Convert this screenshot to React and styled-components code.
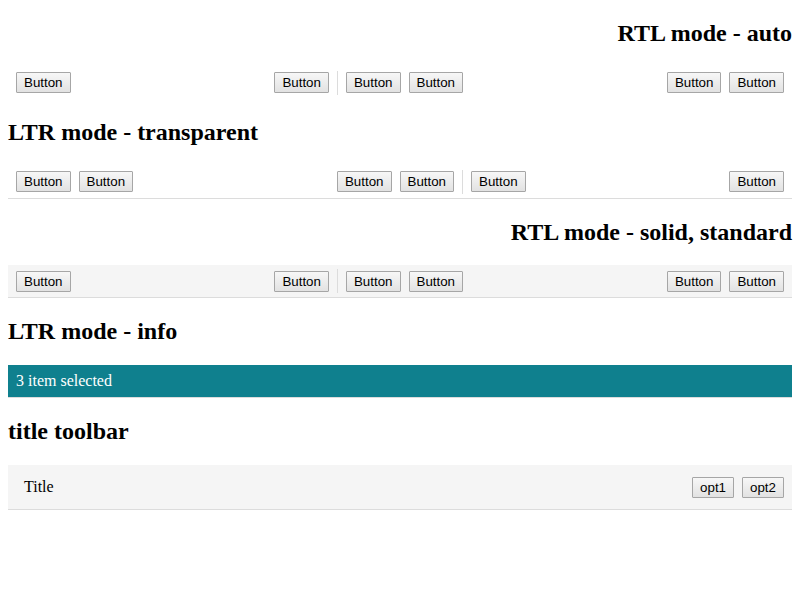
import React from 'react'
import styled, { createGlobalStyle } from 'styled-components'

const GlobalStyle = createGlobalStyle`
  body {
    margin: 0;
    font-family: "Liberation Serif", "Times New Roman", serif;
    background: #fff;
    color: #000;
  }
`

const Page = styled.div`
  padding: 0 8px;
`

const Heading = styled.h2`
  font-family: "Liberation Serif", serif;
  font-size: 24px;
  font-weight: bold;
  margin: 19.92px 0;
  direction: ${(p) => (p.$rtl ? 'rtl' : 'ltr')};
`

const Bar = styled.div`
  display: flex;
  align-items: center;
  box-sizing: border-box;
  height: ${(p) => (p.$border ? '33px' : '32px')};
  padding: 0 8px;
  direction: ${(p) => (p.$rtl ? 'rtl' : 'ltr')};
  background: ${(p) => (p.$solid ? '#f5f5f5' : 'transparent')};
  border-bottom: ${(p) => (p.$border ? '1px solid #dcdcdc' : 'none')};
`

const Side = styled.div`
  flex: 1 1 auto;
  display: flex;
  align-items: center;
  gap: 8px;
  justify-content: ${(p) => (p.$end ? 'flex-end' : 'flex-start')};
`

const Middle = styled.div`
  flex: 0 0 auto;
  display: flex;
  align-items: center;
  gap: 8px;
`

const Separator = styled.span`
  width: 1px;
  height: 24px;
  background: #dcdcdc;
`

const Btn = styled.button`
  font-family: "Liberation Sans", Arial, sans-serif;
  font-size: 13.33px;
  line-height: 15px;
  padding: 2px 7px;
  margin: 0;
  border: 1px solid #a6a6a6;
  border-radius: 1px;
  color: #000;
  background: linear-gradient(#f7f7f7, #e2e2e2);
`

const InfoBar = styled.div`
  display: flex;
  align-items: center;
  box-sizing: border-box;
  height: 33px;
  padding: 0 8px;
  background: #0f808e;
  color: #fff;
  font-size: 16px;
  border-bottom: 1px solid #dcdcdc;
`

const TitleBar = styled.div`
  display: flex;
  align-items: center;
  box-sizing: border-box;
  height: 45px;
  padding: 0 8px 0 16px;
  background: #f5f5f5;
  border-bottom: 1px solid #dcdcdc;
`

const TitleText = styled.span`
  flex: 1;
  font-size: 16px;
`

const Actions = styled.div`
  display: flex;
  gap: 8px;
`

const ButtonToolbar = ({ rtl, solid, border }) => (
  <Bar $rtl={rtl} $solid={solid} $border={border}>
    <Side>
      <Btn>Button</Btn>
      <Btn>Button</Btn>
    </Side>
    <Middle>
      <Btn>Button</Btn>
      <Btn>Button</Btn>
      <Separator />
      <Btn>Button</Btn>
    </Middle>
    <Side $end>
      <Btn>Button</Btn>
    </Side>
  </Bar>
)

export default function App() {
  return (
    <Page>
      <GlobalStyle />
      <Heading $rtl>RTL mode - auto</Heading>
      <ButtonToolbar rtl />

      <Heading>LTR mode - transparent</Heading>
      <ButtonToolbar border />

      <Heading $rtl>RTL mode - solid, standard</Heading>
      <ButtonToolbar rtl solid border />

      <Heading>LTR mode - info</Heading>
      <InfoBar>3 item selected</InfoBar>

      <Heading>title toolbar</Heading>
      <TitleBar>
        <TitleText>Title</TitleText>
        <Actions>
          <Btn>opt1</Btn>
          <Btn>opt2</Btn>
        </Actions>
      </TitleBar>
    </Page>
  )
}
